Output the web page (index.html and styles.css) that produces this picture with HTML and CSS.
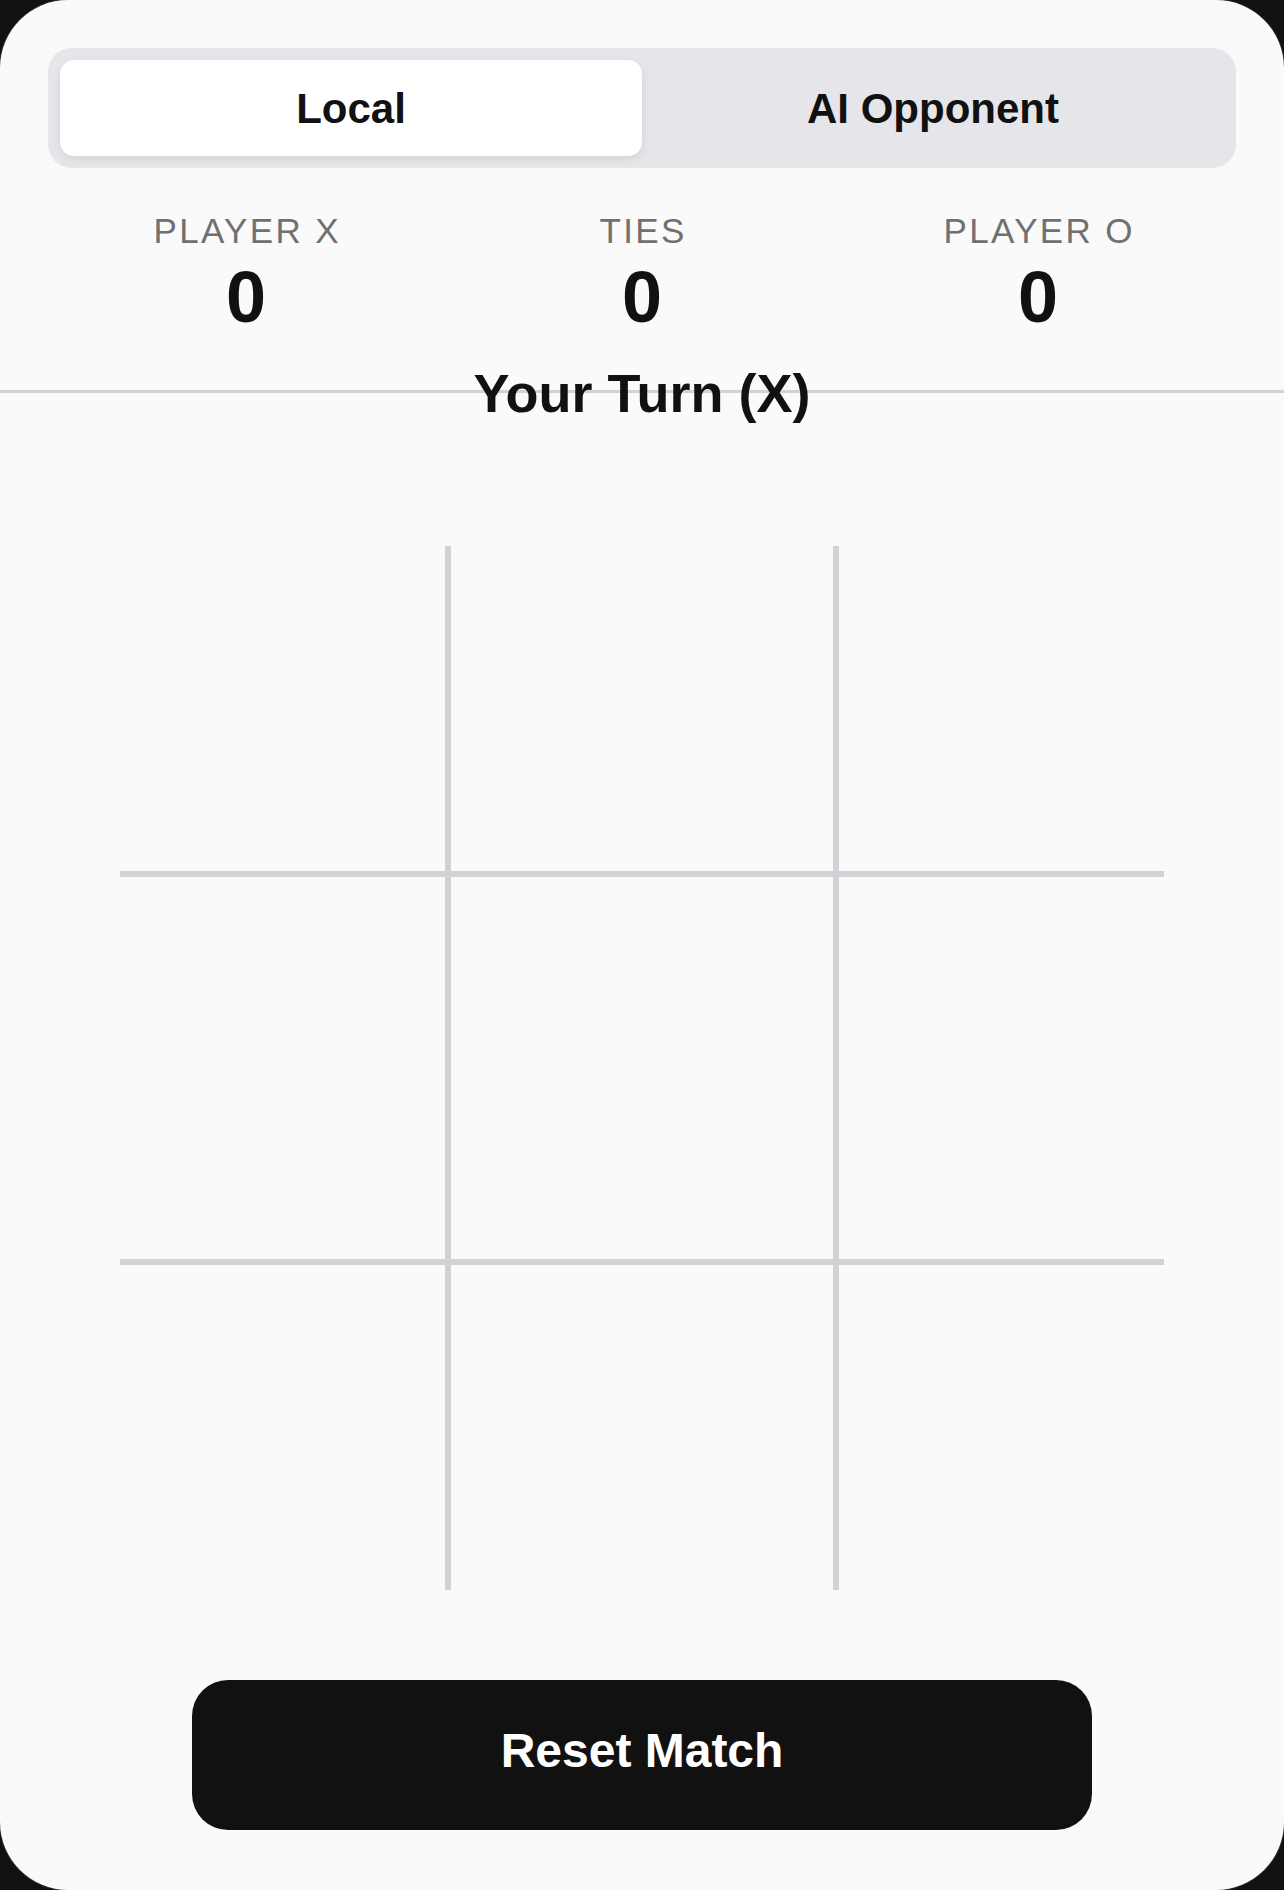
FILE: index.html
```html
<!DOCTYPE html>
<html lang="en">
<head>
<meta charset="utf-8">
<title>Tic Tac Toe</title>
<link rel="stylesheet" href="styles.css">
</head>
<body>
<main class="card">
  <div class="mode-switch">
    <button class="mode-btn is-active">Local</button>
    <button class="mode-btn">AI Opponent</button>
  </div>

  <section class="scoreboard">
    <div class="score">
      <div class="score-label">PLAYER X</div>
      <div class="score-value">0</div>
    </div>
    <div class="score">
      <div class="score-label">TIES</div>
      <div class="score-value">0</div>
    </div>
    <div class="score">
      <div class="score-label">PLAYER O</div>
      <div class="score-value">0</div>
    </div>
  </section>

  <div class="status">Your Turn (X)</div>

  <div class="board">
    <div class="cell"></div><div class="cell"></div><div class="cell"></div>
    <div class="cell"></div><div class="cell"></div><div class="cell"></div>
    <div class="cell"></div><div class="cell"></div><div class="cell"></div>
  </div>

  <button class="reset-btn">Reset Match</button>
</main>
</body>
</html>
```

FILE: styles.css
```css
* {
  box-sizing: border-box;
}

html, body {
  margin: 0;
  padding: 0;
  background: #111111;
}

body {
  font-family: "Liberation Sans", Arial, sans-serif;
  color: #111111;
}

.card {
  width: 1284px;
  height: 1890px;
  background: #fafafa;
  border-radius: 68px;
  box-shadow: 0 0 0 1px #262626;
  padding: 48px 48px 0;
  display: flex;
  flex-direction: column;
  align-items: stretch;
  overflow: hidden;
}

.mode-switch {
  height: 120px;
  padding: 12px;
  background: #e5e5ea;
  border-radius: 24px;
  display: grid;
  grid-template-columns: 1fr 1fr;
}

.mode-btn {
  border: none;
  background: transparent;
  border-radius: 14px;
  font-family: "Liberation Sans", Arial, sans-serif;
  font-weight: 700;
  font-size: 42px;
  color: #111111;
  padding: 2px 0 0;
  margin: 0;
}

.mode-btn.is-active {
  background: #ffffff;
  box-shadow: 0 3px 8px rgba(0, 0, 0, 0.08);
}

.scoreboard {
  margin: 43px -48px 0;
  padding: 0 48px 53px;
  border-bottom: 3px solid #d1d1d6;
  display: grid;
  grid-template-columns: 1fr 1fr 1fr;
}

.score {
  display: flex;
  flex-direction: column;
  align-items: center;
}

.score-label {
  font-size: 35px;
  line-height: 40px;
  letter-spacing: 2.35px;
  color: #707070;
  margin-right: -2.35px;
}

.score-value {
  margin-top: 6px;
  font-size: 72px;
  line-height: 80px;
  font-weight: 700;
  color: #111111;
}

.status {
  margin-top: -30px;
  text-align: center;
  font-size: 54px;
  line-height: 60px;
  font-weight: 700;
  color: #111111;
}

.board {
  margin: 123px auto 0;
  width: 1044px;
  height: 1044px;
  display: grid;
  grid-template-columns: 325px 382px 325px;
  grid-template-rows: 325px 382px 325px;
  gap: 6px;
  background: #d1d1d6;
}

.cell {
  background: #fafafa;
}

.reset-btn {
  margin: 90px auto 0;
  width: 900px;
  height: 150px;
  padding: 0 0 9px;
  border: none;
  border-radius: 36px;
  background: #111111;
  color: #ffffff;
  font-family: "Liberation Sans", Arial, sans-serif;
  font-weight: 700;
  font-size: 48px;
}
```
